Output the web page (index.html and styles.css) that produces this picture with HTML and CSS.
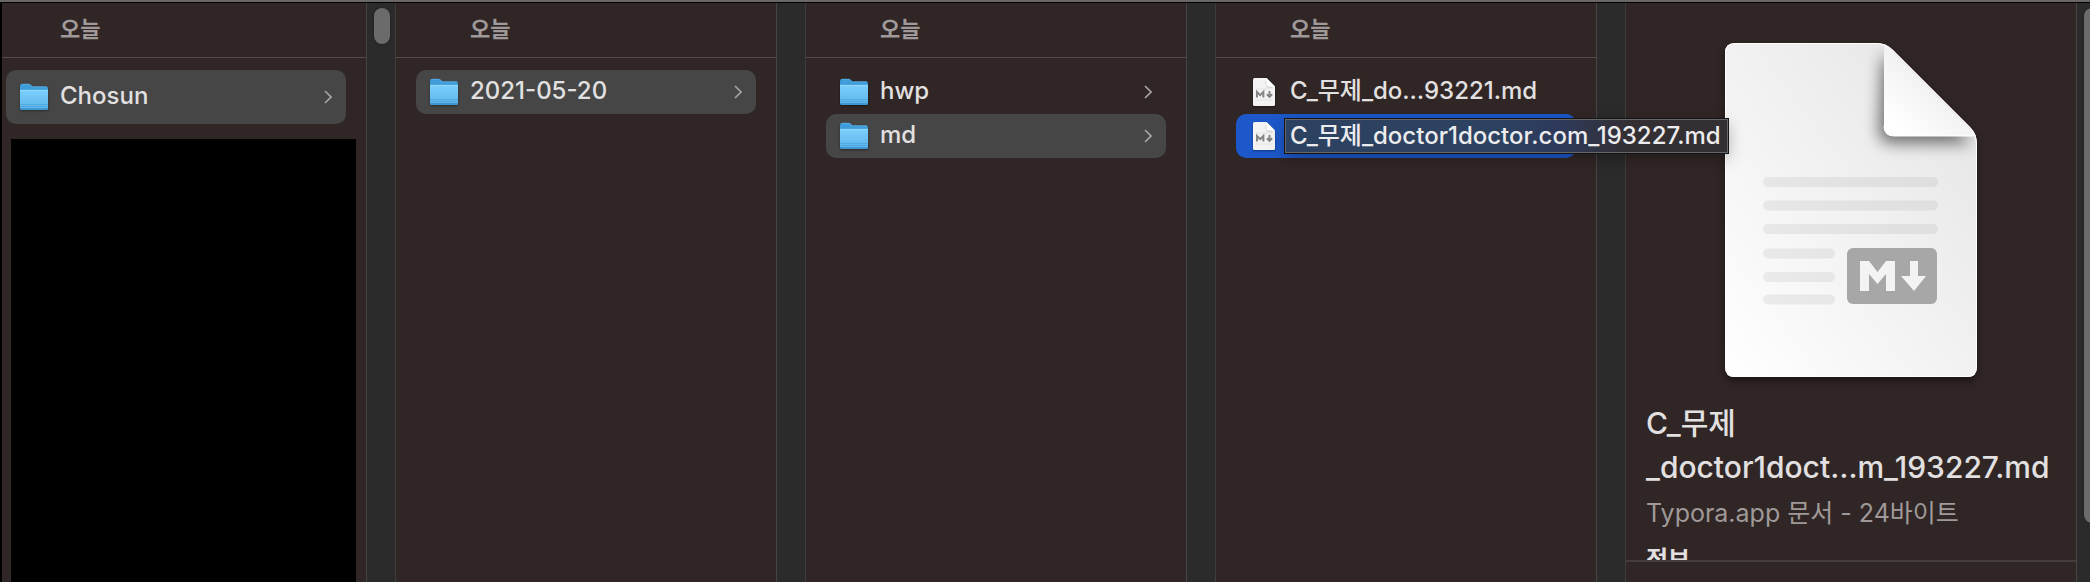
FILE: index.html
```
<!DOCTYPE html>
<html lang="ko">
<head>
<meta charset="utf-8">
<title>md</title>
<link rel="stylesheet" href="styles.css">
</head>
<body>
<svg class="defs" aria-hidden="true">
  <defs>
    <linearGradient id="folder-front" x1="0" y1="0" x2="0" y2="1">
      <stop offset="0" stop-color="#7dcffb"/><stop offset="1" stop-color="#5ab4ea"/>
    </linearGradient>
    <linearGradient id="paper" x1="0.8" y1="0.2" x2="0" y2="1">
      <stop offset="0" stop-color="#e9e9e9"/><stop offset="1" stop-color="#ffffff"/>
    </linearGradient>
    <linearGradient id="fold" x1="0.7" y1="0.3" x2="0.15" y2="0.9">
      <stop offset="0" stop-color="#ebebeb"/><stop offset="1" stop-color="#ffffff"/>
    </linearGradient>
    <symbol id="folder" viewBox="0 0 28 28">
      <path d="M0 3.2Q0 1 2 1H8.5Q9.7 1 10.7 2L12.4 3.6H26Q28 3.6 28 5.6V12H0Z" fill="#3f9ed9"/>
      <path d="M1 1.8Q1.3 1.2 2 1.2H8.5Q9.7 1.2 10.7 2.2L12.4 3.8H27" fill="none" stroke="#63b5e6" stroke-width=".7"/>
      <path d="M0 7H28V25Q28 27 26 27H2Q0 27 0 25Z" fill="url(#folder-front)"/>
      <path d="M0 7.4H28" stroke="#92d8fc"/>
      <path d="M0 21.5H28M0 23.5H28" stroke="#4ca6dc" stroke-width=".8"/>
      <path d="M0 25H28Q28 27 26 27H2Q0 27 0 25Z" fill="#3d97d2"/>
    </symbol>
    <symbol id="markdown" viewBox="0 0 28 28">
      <path d="M4.500 0H16.500L25 8.500V26.500Q25 28 23.500 28H4.500Q3 28 3 26.500V1.500Q3 0 4.500 0Z" fill="#f3f3f3"/>
      <path d="M15 3L16.500 9.500L23 10Z" fill="#cfcfcf"/>
      <path d="M16.500 0L25 8.500H17.500Q16.500 8.500 16.500 7.500Z" fill="#fff"/>
      <path d="M5.500 11H22.500M5.500 22H22.500" stroke="#e2e2e2"/>
      <path d="M7 19.500V14L10.200 17.200L13.400 14V19.500" fill="none" stroke="#858585" stroke-width="2"/>
      <path d="M19.500 13V18M16.900 16.300L19.500 18.900L22.100 16.300" fill="none" stroke="#858585" stroke-width="2"/>
    </symbol>
    <symbol id="chevron" viewBox="0 0 8 14">
      <path d="M1 1L7 7L1 13" fill="none" stroke="#a6a6a6" stroke-width="1.600"/>
    </symbol>
  </defs>
</svg>

<main class="browser">
  <section class="column column-first">
    <h2 class="group">오늘</h2>
    <div class="list">
      <button class="row row-tall selected" type="button"><svg class="icon"><use href="#folder"/></svg><span class="name">Chosun</span><svg class="chevron"><use href="#chevron"/></svg></button>
    </div>
    <div class="blank"></div>
  </section>
  <div class="gutter"><div class="thumb thumb-short"></div></div>

  <section class="column">
    <h2 class="group">오늘</h2>
    <div class="list">
      <button class="row selected" type="button"><svg class="icon"><use href="#folder"/></svg><span class="name">2021-05-20</span><svg class="chevron"><use href="#chevron"/></svg></button>
    </div>
  </section>
  <div class="gutter"></div>

  <section class="column">
    <h2 class="group">오늘</h2>
    <div class="list">
      <button class="row" type="button"><svg class="icon"><use href="#folder"/></svg><span class="name">hwp</span><svg class="chevron"><use href="#chevron"/></svg></button>
      <button class="row selected" type="button"><svg class="icon"><use href="#folder"/></svg><span class="name">md</span><svg class="chevron"><use href="#chevron"/></svg></button>
    </div>
  </section>
  <div class="gutter"></div>

  <section class="column">
    <h2 class="group">오늘</h2>
    <div class="list">
      <button class="row" type="button"><svg class="icon"><use href="#markdown"/></svg><span class="name">C_무제_do…93221.md</span></button>
      <button class="row active" type="button"><svg class="icon"><use href="#markdown"/></svg><span class="tooltip">C_무제_doctor1doctor.com_193227.md</span></button>
    </div>
  </section>
  <div class="gutter"></div>

  <section class="column preview">
    <div class="preview-body">
      <svg class="document" viewBox="0 0 252 334" role="img" aria-label="Markdown">
        <defs>
          <clipPath id="page-clip"><path d="M10 0H152Q161 0 168 7L245 84Q252 91 252 101V324Q252 334 242 334H10Q0 334 0 324V10Q0 0 10 0Z"/></clipPath>
          <filter id="soft" x="-30%" y="-30%" width="160%" height="160%"><feGaussianBlur stdDeviation="8"/></filter>
        </defs>
        <path d="M10 0H152Q161 0 168 7L245 84Q252 91 252 101V324Q252 334 242 334H10Q0 334 0 324V10Q0 0 10 0Z" fill="url(#paper)"/>
        <g clip-path="url(#page-clip)">
          <path d="M158 10L248 100H168Q154 100 154 88Z" fill="#000" opacity=".55" filter="url(#soft)"/>
          <path d="M159 0V83Q159 93 169 93H252Z" fill="url(#fold)"/>
          <path d="M159 83Q159 93 169 93H249" fill="none" stroke="#fff"/>
          <path d="M10 0H152Q161 0 168 7L245 84Q252 91 252 101V324Q252 334 242 334H10Q0 334 0 324V10Q0 0 10 0Z" fill="none" stroke="#fff" stroke-width="2"/>
        </g>
        <g stroke="#000" stroke-opacity=".06" stroke-width="10" stroke-linecap="round">
          <path d="M43 139H208"/><path d="M43 162.500H208"/><path d="M43 186H208"/>
          <path d="M43 210.500H105"/><path d="M43 234H105"/><path d="M43 256.500H105"/>
        </g>
        <rect x="122" y="205" width="90" height="56" rx="6" fill="#a7a7a7"/>
        <path d="M135 248V218H144L152.500 229L161 218H170V248H161V231L152.500 241L144 231V248ZM185 218H193V233H201L189 248L176 233H185Z" fill="#f3f3f3"/>
      </svg>
      <h1 class="title">C_무제<br>_doctor1doct…m_193227.md</h1>
      <p class="kind">Typora.app 문서 - 24바이트</p>
      <h2 class="info">정보</h2>
    </div>
    <div class="preview-footer"></div>
  </section>
  <div class="gutter gutter-last"><div class="thumb thumb-long"></div></div>
</main>
</body>
</html>
```
FILE: styles.css
```
* {
  box-sizing: border-box;
}

body {
  margin: 0;
  background: #000;
  color: #e2e0e0;
  font-family: Inter, "Noto Sans CJK KR", sans-serif;
  font-size: 24px;
  font-weight: 500;
}

.defs {
  position: absolute;
  width: 0;
  height: 0;
}

.browser {
  display: grid;
  grid-template-columns:
    minmax(0, 364fr) 30px minmax(0, 380fr) 30px minmax(0, 380fr) 30px
    minmax(0, 380fr) 30px minmax(0, 450fr) 14px;
  height: 100vh;
  padding-left: 2px;
  border-top: 2px solid #6b6767;
  overflow: hidden;
}

.column {
  display: flex;
  flex-direction: column;
  min-height: 0;
  margin-top: 1px;
  background: #302625;
}

.group {
  margin: 0;
  padding: 0 74px 2px;
  border-bottom: 1px solid #534a4a;
  color: #9f9999;
  font-size: 22px;
  font-weight: 700;
  line-height: 52px;
}

.list {
  display: flex;
  flex-direction: column;
  padding: 12px 20px 0;
}

.column-first .group {
  padding-left: 58px;
}

.column-first .list {
  padding-left: 4px;
}

.row {
  position: relative;
  display: flex;
  align-items: center;
  gap: 12px;
  height: 44px;
  padding: 0 14px;
  border: 0;
  border-radius: 10px;
  background: none;
  color: inherit;
  font: inherit;
  text-align: left;
}

.row-tall {
  height: 54px;
}

.selected {
  background: #464646;
}

.active {
  background: #1c58ca;
}

.icon {
  flex: none;
  width: 28px;
  height: 28px;
  filter: drop-shadow(0 1px 1px rgba(0, 0, 0, 0.4));
}

.name {
  flex: 1;
  padding-bottom: 2px;
  line-height: 32px;
  white-space: nowrap;
}

.chevron {
  width: 8px;
  height: 14px;
}

.tooltip {
  position: absolute;
  z-index: 2;
  top: 5px;
  left: 49px;
  padding: 0 6px 0 4px;
  border: 1px solid #66666a;
  outline: 1px solid #151515;
  background: linear-gradient(to right, #2d4260 0%, #2d4260 48%, #2e395b 62%, #332f32 78%);
  box-shadow: 0 5px 16px rgba(0, 0, 0, 0.3);
  color: #ececee;
  line-height: 32px;
  white-space: nowrap;
}

.blank {
  flex: 1;
  margin: 15px 10px 0 9px;
  background: #000;
}

.gutter {
  margin-top: 1px;
  padding: 5px 6px 0 7px;
  border-right: 1px solid #3d3b3b;
  border-left: 1px solid #464444;
  background: #2b2b2b;
}

.gutter-last {
  border-right: 0;
  padding-right: 0;
  overflow: hidden;
}

.thumb {
  width: 16px;
  border-radius: 8px;
  background: #6b6b6b;
  box-shadow: 0 0 1px 1px #252525;
}

.thumb-short {
  height: 36px;
}

.thumb-long {
  height: 515px;
}

.preview-body {
  display: flex;
  flex: 1;
  flex-direction: column;
  min-height: 0;
  padding: 40px 20px 0;
  overflow: hidden;
}

.document {
  flex: none;
  align-self: center;
  width: 252px;
  height: 334px;
  filter: drop-shadow(0 4px 4px rgba(0, 0, 0, 0.45));
}

.title {
  margin: 24px 0 0;
  font-size: 30px;
  font-weight: 500;
  line-height: 44px;
  white-space: nowrap;
}

.kind {
  margin: 6px 0 0;
  color: #9f9999;
  font-size: 25px;
  font-weight: 400;
  line-height: 36px;
  white-space: nowrap;
}

.info {
  margin: 13px 0 0;
  font-size: 24px;
  font-weight: 700;
  line-height: 32px;
}

.preview-footer {
  flex: none;
  height: 22px;
  border-top: 2px solid #453c3c;
}
```
